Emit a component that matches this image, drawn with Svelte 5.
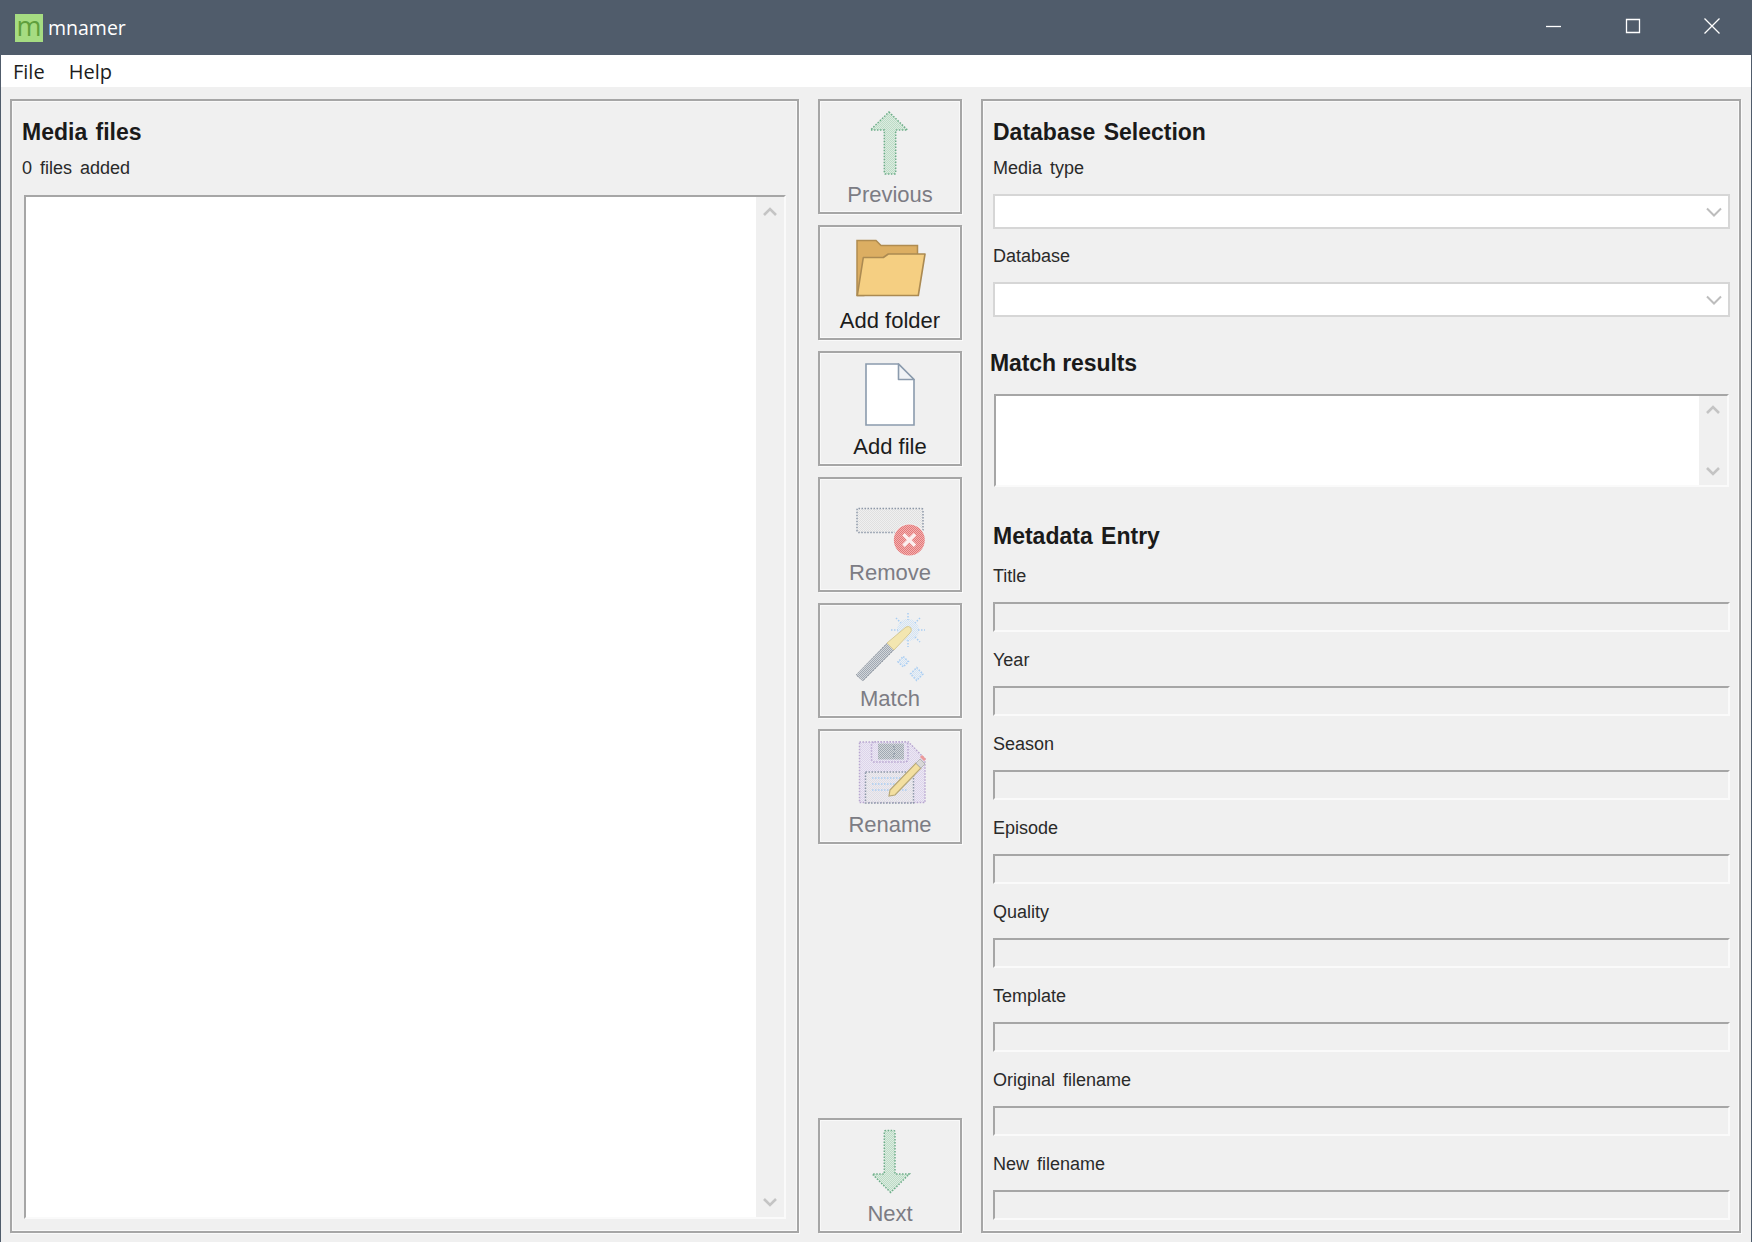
<script>
  const fields = ['Title', 'Year', 'Season', 'Episode', 'Quality', 'Template', 'Original filename', 'New filename'];
  const topActions = [
    { id: 'previous', label: 'Previous', disabled: true },
    { id: 'folder', label: 'Add folder', disabled: false },
    { id: 'file', label: 'Add file', disabled: false },
    { id: 'remove', label: 'Remove', disabled: true },
    { id: 'match', label: 'Match', disabled: true },
    { id: 'rename', label: 'Rename', disabled: true },
  ];
</script>

{#snippet icon(id)}
  <svg class="icon" viewBox="0 0 72 72" width="72" height="72" aria-hidden="true">
    {#if id === 'previous'}
      <path class="dots dots--green" d="M35 6 53.500 24H41.700V66.500Q41.700 68 40 68H32Q30.300 68 30.300 66.500V24H16.500Z" fill="url(#dither-green)" />
    {:else if id === 'next'}
      <path class="dots dots--green" d="M36.700 67.500 18.300 49H30.300V7Q30.300 5.500 32 5.500H39.500Q41 5.500 41 7V49H55.300Z" fill="url(#dither-green)" />
    {:else if id === 'folder'}
      <path d="M3 8.500H22L27 13.500H63.500V41L10 63.500H3Z" fill="#dcae62" stroke="#b08c50" stroke-width="1.5" />
      <path d="M9.300 25.500H29.300L34.300 22H71L64.300 63.500H3.300Z" fill="#f5cf82" stroke="#ab8a52" stroke-width="1.6" stroke-linejoin="round" />
    {:else if id === 'file'}
      <path d="M12 6H44.500L60 21.500V67H12Z" fill="#fff" stroke="#8b9bad" stroke-width="1.6" />
      <path d="M44.500 6V21.500H60Z" fill="#f0f3f6" stroke="#8b9bad" stroke-width="1.6" stroke-linejoin="round" />
    {:else if id === 'remove'}
      <rect class="dots dots--slate" x="3" y="24.500" width="66" height="24" rx="1.500" fill="url(#dither-gray)" />
      <circle cx="55.300" cy="56" r="16.500" fill="#f0f0f0" />
      <circle cx="55.300" cy="56" r="15.500" fill="url(#dither-red)" />
      <path d="M49.500 50.200 61 61.800M61 50.200 49.500 61.800" stroke="#fbeeee" stroke-width="3.400" />
    {:else if id === 'match'}
      <circle cx="54" cy="20" r="11" fill="url(#dither-blue)" />
      <path class="dots dots--blue" d="M54 3V10M54 30V37M37 20H44M64 20H71M42 8 47 13M61 27 66 32M66 8 61 13M47 27 42 32" />
      <path class="dots dots--blue" d="M49.300 46.500 54.500 51.700 49.300 57 44 51.700Z" fill="url(#dither-blue)" />
      <path class="dots dots--blue" d="M62.700 57.500 69 64 62.700 70.500 56.500 64Z" fill="url(#dither-blue)" />
      <path d="M2 65 33 33 40 40 9 71Z" fill="url(#dither-slate)" stroke="#9aa0a8" stroke-width="1" stroke-dasharray="1.500 1" />
      <path d="M33 33 52 17Q55 15.500 57 18 58 21 56 23L40 40Z" fill="#f3e6b0" stroke="#d5c894" stroke-width="1" />
    {:else if id === 'rename'}
      <path class="dots dots--purple" d="M5.500 6H54.500L71 23V66.500H5.500Z" fill="url(#dither-purple)" />
      <rect class="dots dots--purple" x="17.500" y="6" width="36.500" height="20" rx="3" fill="url(#dither-purple)" />
      <rect x="24" y="7.500" width="26" height="16" fill="url(#dither-slate)" />
      <path class="dots dots--slate" d="M40 10V14M40 17V21" />
      <rect class="dots dots--slate" x="11.500" y="36" width="48" height="31" fill="#f7f7f7" />
      <path class="dots dots--blue" d="M18 42H54M18 48H54M18 54H54" />
      <path d="M36 54 62 27 67 32 41 59 35 60Z" fill="#f3dfa0" stroke="#b8a878" stroke-width="1.200" />
      <path d="M62 27 66 23 71 28 67 32Z" fill="#d8d8d8" stroke="#b5b5b5" stroke-width="1" />
      <path d="M67 20 71 24" stroke="#ec9a9a" stroke-width="3" />
    {/if}
  </svg>
{/snippet}

{#snippet action(item)}
  <button type="button" class="action" class:action--off={item.disabled} disabled={item.disabled}>
    {@render icon(item.id)}
    <span class="action__label">{item.label}</span>
  </button>
{/snippet}

{#snippet scrollbar()}
  <div class="scrollbar">
    <svg viewBox="0 0 14 9" width="14" height="9" aria-hidden="true"><path d="M1 8 7 2 13 8" /></svg>
    <svg viewBox="0 0 14 9" width="14" height="9" aria-hidden="true"><path d="M1 1 7 7 13 1" /></svg>
  </div>
{/snippet}

{#snippet combo()}
  <div class="combo">
    <svg viewBox="0 0 16 10" width="16" height="10" aria-hidden="true"><path d="M1 1.500 8 8.500 15 1.500" /></svg>
  </div>
{/snippet}

<div class="window">
  <header class="titlebar">
    <div class="logo">m</div>
    <span class="titlebar__name">mnamer</span>
    <div class="controls">
      <svg viewBox="0 0 16 16" width="16" height="16" aria-hidden="true"><path d="M0 8.500H15" /></svg>
      <svg viewBox="0 0 16 16" width="16" height="16" aria-hidden="true"><path d="M1.500 1.500H14.500V14.500H1.500Z" /></svg>
      <svg viewBox="0 0 16 16" width="16" height="16" aria-hidden="true"><path d="M.5.5 15.500 15.500M15.500.5.5 15.500" /></svg>
    </div>
  </header>

  <nav class="menubar">
    <span>File</span>
    <span>Help</span>
  </nav>

  <main class="content">
    <section class="panel panel--files">
      <h2 class="heading">Media files</h2>
      <p class="label label--count">0 files added</p>
      <div class="list">
        <div class="list__body"></div>
        {@render scrollbar()}
      </div>
    </section>

    <div class="actions">
      {#each topActions as item (item.id)}
        {@render action(item)}
      {/each}
      <div class="actions__push">
        {@render action({ id: 'next', label: 'Next', disabled: true })}
      </div>
    </div>

    <section class="panel panel--meta">
      <h2 class="heading">Database Selection</h2>
      <p class="label label--media">Media type</p>
      {@render combo()}
      <p class="label label--database">Database</p>
      {@render combo()}

      <h2 class="heading heading--match">Match results</h2>
      <div class="results">
        <div class="list__body"></div>
        {@render scrollbar()}
      </div>

      <h2 class="heading heading--entry">Metadata Entry</h2>
      <div class="fields">
        {#each fields as name}
          <div class="field">
            <p class="label">{name}</p>
            <div class="field__input"></div>
          </div>
        {/each}
      </div>
    </section>
  </main>

  <svg class="defs" width="0" height="0" aria-hidden="true">
    <defs>
      <pattern id="dither-green" width="2" height="2" patternUnits="userSpaceOnUse">
        <rect width="2" height="2" fill="#dcebe0" /><rect width="1" height="1" fill="#bcdcc6" /><rect x="1" y="1" width="1" height="1" fill="#bcdcc6" />
      </pattern>
      <pattern id="dither-gray" width="2" height="2" patternUnits="userSpaceOnUse">
        <rect width="1" height="1" fill="#e0e0e0" /><rect x="1" y="1" width="1" height="1" fill="#e0e0e0" />
      </pattern>
      <pattern id="dither-red" width="2" height="2" patternUnits="userSpaceOnUse">
        <rect width="2" height="2" fill="#f4b0b0" /><rect width="1" height="1" fill="#e27a7a" /><rect x="1" y="1" width="1" height="1" fill="#e27a7a" />
      </pattern>
      <pattern id="dither-blue" width="2" height="2" patternUnits="userSpaceOnUse">
        <rect width="1" height="1" fill="#cfe3f7" /><rect x="1" y="1" width="1" height="1" fill="#cfe3f7" />
      </pattern>
      <pattern id="dither-slate" width="2" height="2" patternUnits="userSpaceOnUse">
        <rect width="2" height="2" fill="#d2d6da" /><rect width="1" height="1" fill="#a0a8b2" /><rect x="1" y="1" width="1" height="1" fill="#a0a8b2" />
      </pattern>
      <pattern id="dither-purple" width="2" height="2" patternUnits="userSpaceOnUse">
        <rect width="2" height="2" fill="#ece8f4" /><rect width="1" height="1" fill="#dcd4ea" /><rect x="1" y="1" width="1" height="1" fill="#dcd4ea" />
      </pattern>
    </defs>
  </svg>
</div>

<style>
  :global(body) {
    margin: 0;
    background: #f0f0f0;
    font-family: "Liberation Sans", Arial, sans-serif;
  }

  .window {
    height: 1242px;
    box-sizing: border-box;
    display: flex;
    flex-direction: column;
    overflow: hidden;
    border-left: 1px solid #505c6b;
    border-right: 1px solid #505c6b;
    background: #f0f0f0;
    color: #1c1c1c;
  }

  /* Title bar */
  .titlebar {
    flex: 0 0 55px;
    display: flex;
    align-items: center;
    margin: 0 -1px;
    padding-left: 15px;
    background: #505c6b;
    color: #fff;
  }

  .logo {
    width: 28px;
    height: 28px;
    background: #a6dc82;
    color: #5f9f3c;
    font: 27px/24px "Open Sans", sans-serif;
    text-align: center;
  }

  .titlebar__name {
    margin-left: 5px;
    font: 19.5px "Open Sans", sans-serif;
  }

  .controls {
    margin-left: auto;
    padding-right: 32px;
    display: flex;
    gap: 63px;
    margin-top: -3px;
  }

  .controls svg {
    fill: none;
    stroke: #fff;
    stroke-width: 1.3;
  }

  /* Menu */
  .menubar {
    flex: 0 0 32px;
    display: flex;
    align-items: center;
    gap: 24px;
    padding-left: 12px;
    background: #fff;
    font: 20px "Open Sans", sans-serif;
  }

  /* Content */
  .content {
    flex: 1;
    min-height: 0;
    display: flex;
    padding: 12px 9px 9px 9px;
  }

  .panel {
    box-sizing: border-box;
    display: flex;
    flex-direction: column;
    overflow: hidden;
    border: 2px solid #a6a6a6;
    box-shadow: inset 0 0 0 1px #f9f9f9, 1px 1px 0 #fafafa;
  }

  .panel--files {
    flex: 0 0 789px;
    padding: 18px 11px 12px 10px;
  }

  .panel--meta {
    flex: 0 0 760px;
    padding: 18px 8px 0 10px;
  }

  .heading {
    margin: 0;
    font-size: 23px;
    line-height: 26px;
    font-weight: 700;
    word-spacing: 2px;
    color: #1a1a1a;
  }

  .label {
    margin: 0;
    font-size: 18px;
    line-height: 22px;
    word-spacing: 3px;
    color: #2a2a2a;
  }

  .label--count {
    margin-top: 12px;
  }

  .label--media {
    margin-top: 12px;
    margin-bottom: 15px;
  }

  .label--database {
    margin-top: 16px;
    margin-bottom: 15px;
  }

  .list {
    flex: 1;
    min-height: 0;
    display: flex;
    margin: 16px 0 0 2px;
    border-top: 2px solid #a6a6a6;
    border-left: 2px solid #a6a6a6;
    border-bottom: 2px solid #fafafa;
    border-right: 2px solid #fafafa;
  }

  .list__body {
    flex: 1;
    background: #fff;
  }

  .scrollbar {
    flex: 0 0 28px;
    display: flex;
    flex-direction: column;
    align-items: center;
    justify-content: space-between;
    padding: 10px 0;
    background: #f0f0f0;
  }

  .scrollbar svg {
    fill: none;
    stroke: #c4c4c4;
    stroke-width: 2.6;
  }

  /* Actions column */
  .actions {
    flex: 0 0 144px;
    margin: 0 19px;
    display: flex;
    flex-direction: column;
    gap: 11px;
  }

  .actions__push {
    margin-top: auto;
    display: flex;
    flex-direction: column;
  }

  .action {
    box-sizing: border-box;
    height: 115px;
    flex: none;
    padding: 5px 0 0;
    display: flex;
    flex-direction: column;
    align-items: center;
    border: 2px solid #a6a6a6;
    box-shadow: inset 0 0 0 1px #f9f9f9, 1px 1px 0 #fafafa;
    background: #f0f0f0;
    font-family: inherit;
    color: #1c1c1c;
  }

  .action--off {
    color: #7c7c84;
  }

  .action__label {
    margin-top: 6px;
    font-size: 22px;
    line-height: 22px;
  }

  .icon {
    display: block;
    filter: blur(0.25px);
  }

  .dots {
    stroke-width: 1.5;
    stroke-dasharray: 1.5 1.5;
  }

  .dots--green {
    stroke: #6fae8a;
  }

  .dots--slate {
    stroke: #8d98a8;
    fill: none;
  }

  .dots--slate[fill] {
    fill: url(#dither-gray);
  }

  .dots--blue {
    stroke: #a9cdf2;
    fill: none;
  }

  .dots--blue[fill] {
    fill: url(#dither-blue);
  }

  .dots--purple {
    stroke: #b8a6d0;
  }

  /* Database selection */
  .combo {
    flex: none;
    box-sizing: border-box;
    height: 35px;
    margin-right: 1px;
    display: flex;
    align-items: center;
    justify-content: flex-end;
    padding-right: 6px;
    background: #fff;
    border: 2px solid #d6d6d6;
  }

  .combo svg {
    fill: none;
    stroke: #bdbdbd;
    stroke-width: 2;
  }

  .heading--match {
    margin: 33px 0 0 -3px;
    word-spacing: 0;
    letter-spacing: -0.1px;
  }

  .results {
    flex: 0 0 93px;
    display: flex;
    margin: 18px 2px 0 1px;
    border-top: 2px solid #a6a6a6;
    border-left: 2px solid #a6a6a6;
    border-bottom: 2px solid #fafafa;
    border-right: 2px solid #fafafa;
    box-sizing: border-box;
  }

  .results .scrollbar {
    padding: 9px 0;
  }

  .heading--entry {
    margin-top: 36px;
  }

  /* Metadata fields */
  .fields {
    margin-top: 16px;
    display: flex;
    flex-direction: column;
    gap: 17px;
  }

  .field {
    display: flex;
    flex-direction: column;
    gap: 15px;
  }

  .field__input {
    box-sizing: border-box;
    height: 30px;
    margin-right: 1px;
    background: #f0f0f0;
    border-top: 2px solid #a6a6a6;
    border-left: 2px solid #a6a6a6;
    border-bottom: 2px solid #fafafa;
    border-right: 2px solid #fafafa;
  }

  .defs {
    position: absolute;
  }
</style>
